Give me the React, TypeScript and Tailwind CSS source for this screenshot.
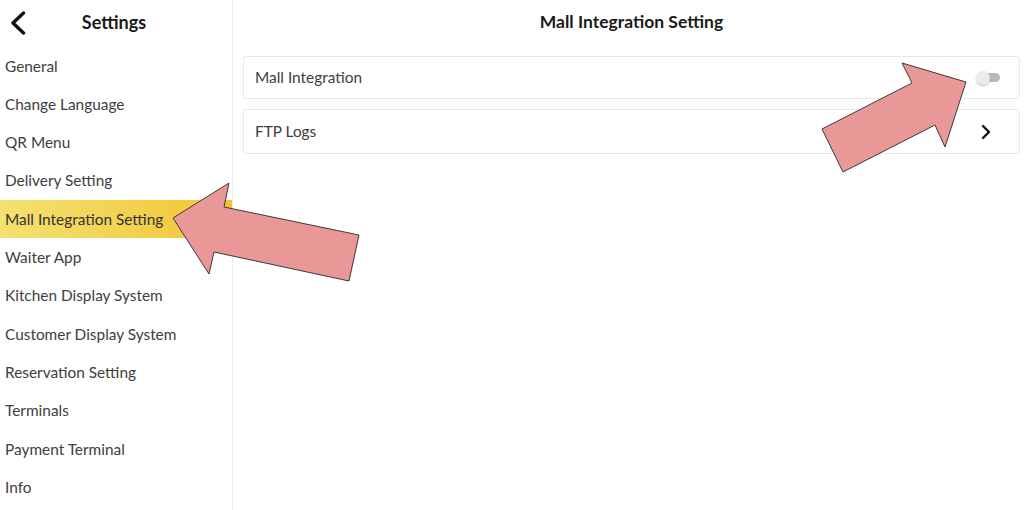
import React, { useState } from "react";

const MENU_ITEMS = [
  "General",
  "Change Language",
  "QR Menu",
  "Delivery Setting",
  "Mall Integration Setting",
  "Waiter App",
  "Kitchen Display System",
  "Customer Display System",
  "Reservation Setting",
  "Terminals",
  "Payment Terminal",
  "Info",
];

// Annotation arrows drawn over the screenshot
function Arrows() {
  return (
    <svg
      className="absolute inset-0 pointer-events-none"
      width="1024"
      height="510"
      viewBox="0 0 1024 510"
    >
      <polygon
        points="173,218 229,183 224,207 359,235 349,281 214,252 209,274"
        fill="#e99797"
        stroke="#3a3a3a"
        strokeWidth="1"
        strokeLinejoin="miter"
      />
      <polygon
        points="966,82 902,63 912,83 822,129 843,172 935,125 945,147"
        fill="#e99797"
        stroke="#3a3a3a"
        strokeWidth="1"
        strokeLinejoin="miter"
      />
    </svg>
  );
}

export default function App() {
  const [active] = useState("Mall Integration Setting");
  const [enabled, setEnabled] = useState(false);

  return (
    <div
      className="relative w-[1024px] h-[510px] bg-white overflow-hidden flex text-[#404040]"
      style={{ fontFamily: "Lato, 'Open Sans', sans-serif" }}
    >
      {/* Sidebar */}
      <aside className="w-[233px] shrink-0 border-r border-[#ececec] flex flex-col">
        <div className="h-[47px] flex items-center relative">
          <svg
            className="absolute left-[9px] top-[11px]"
            width="18"
            height="24"
            viewBox="0 0 18 24"
          >
            <path
              d="M14.5 2 L4 12 L14.5 22"
              fill="none"
              stroke="#111"
              strokeWidth="3.4"
              strokeLinecap="round"
              strokeLinejoin="round"
            />
          </svg>
          <div className="w-full text-center pr-[4px] text-[18px] font-bold text-[#1a1a1a] -mt-[3px]">
            Settings
          </div>
        </div>
        {MENU_ITEMS.map((item) => (
          <div
            key={item}
            className={`h-[38.3px] flex items-center pl-[5px] text-[15.4px] ${
              item === active
                ? "bg-gradient-to-r from-[#f3e170] to-[#f2c52e] text-[#333]"
                : ""
            }`}
          >
            {item}
          </div>
        ))}
      </aside>

      {/* Main */}
      <main className="flex-1 flex flex-col">
        <div className="h-[47px] flex items-center justify-center pl-[6px] -mt-[1px] text-[17.5px] font-bold text-[#1a1a1a]">
          Mall Integration Setting
        </div>
        <div className="pl-[10px] pr-[4px] flex flex-col gap-[10px] mt-[10px]">
          <div className="h-[43px] border border-[#e9e9e9] rounded-[3px] flex items-center justify-between pl-[11px] pr-[18px] text-[15.4px]">
            <span>Mall Integration</span>
            <button
              onClick={() => setEnabled(!enabled)}
              className="relative w-[25px] h-[14px] flex items-center"
            >
              <span className="absolute left-[4px] right-[1px] h-[9px] rounded-full bg-[#b9b9b9]" />
              <span className="absolute left-0 w-[14px] h-[14px] rounded-full bg-[#ececec] shadow-[0_1px_2px_rgba(0,0,0,0.25)]" />
            </button>
          </div>
          <div className="h-[45px] border border-[#e9e9e9] rounded-[3px] flex items-center justify-between pl-[11px] pr-[28px] text-[15.4px]">
            <span>FTP Logs</span>
            <svg width="10" height="16" viewBox="0 0 10 16">
              <path
                d="M2 2 L8 8 L2 14"
                fill="none"
                stroke="#111"
                strokeWidth="2.4"
                strokeLinecap="round"
                strokeLinejoin="round"
              />
            </svg>
          </div>
        </div>
      </main>

      <Arrows />
    </div>
  );
}
